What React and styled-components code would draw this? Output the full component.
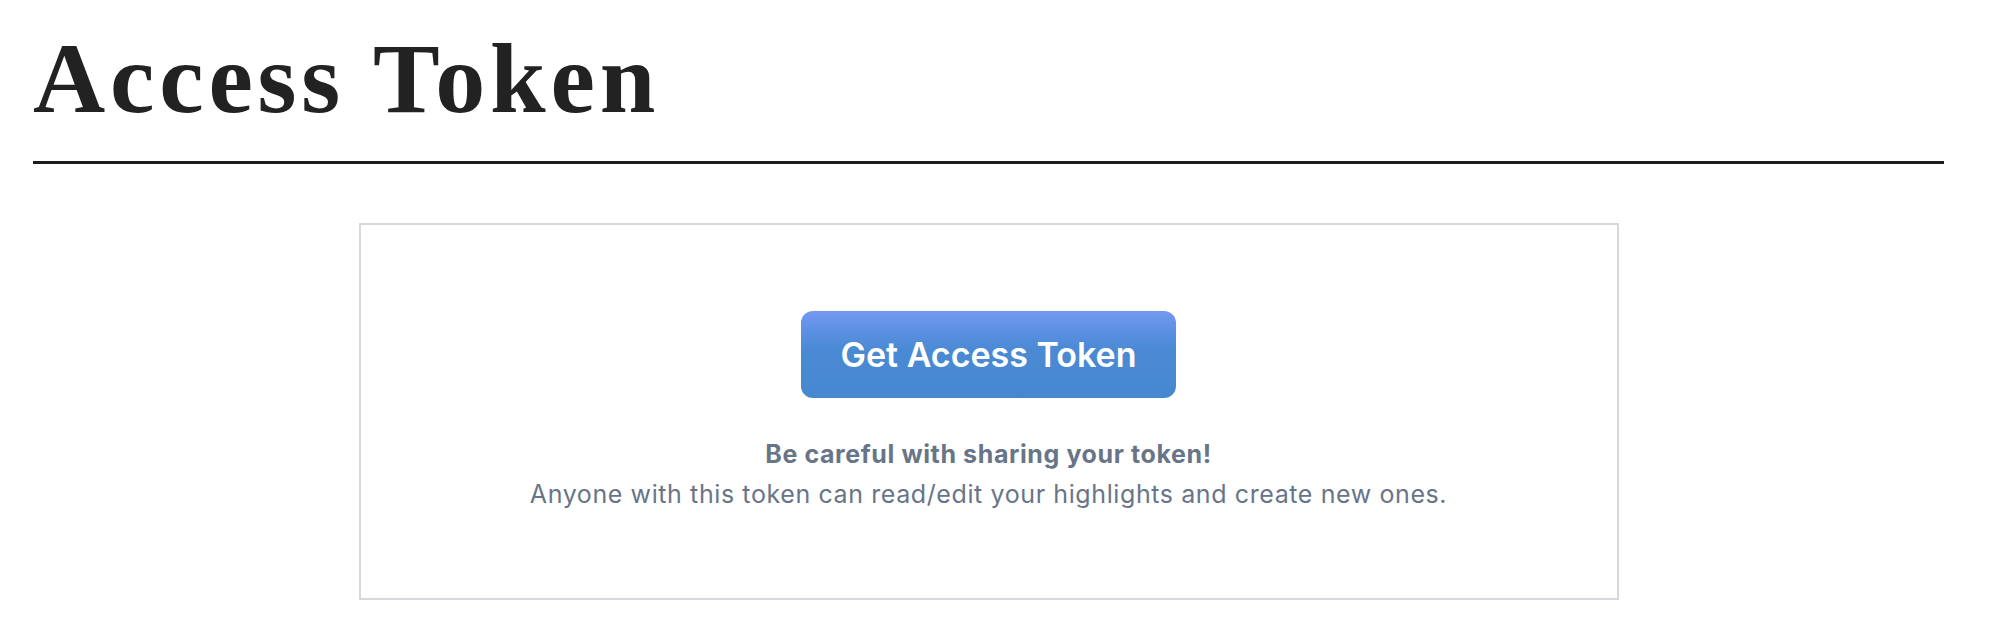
import React from "react";
import styled, { createGlobalStyle } from "styled-components";

const Global = createGlobalStyle`
  html, body { margin: 0; padding: 0; background: #ffffff; }
  body { font-family: "Inter", "Liberation Sans", sans-serif; }
`;

const Page = styled.main`
  padding: 29px 56px 0 33px;
`;

const Header = styled.header`
  border-bottom: 3px solid #1c1c1c;
  padding-bottom: 32px;
`;

const Title = styled.h1`
  margin: 0;
  font-family: "Liberation Serif", "DejaVu Serif", serif;
  font-weight: 700;
  font-size: 100px;
  line-height: 100px;
  letter-spacing: 4.8px;
  color: #222222;
`;

const Card = styled.section`
  width: 1260px;
  box-sizing: border-box;
  margin: 59px auto 0;
  border: 2px solid #d7d7dc;
  padding: 86px 40px 84px;
  display: flex;
  flex-direction: column;
  align-items: center;
`;

const Button = styled.button`
  width: 375px;
  height: 87px;
  border: none;
  border-radius: 12px;
  background: linear-gradient(180deg, #7498f1 0%, #5a8fe0 25%, #4a8ad4 45%, #4688d0 100%);
  color: #ffffff;
  font-family: "Inter", "Liberation Sans", sans-serif;
  font-weight: 600;
  font-size: 34px;
  cursor: pointer;
  box-shadow: 0 0 1px rgba(0, 0, 0, 0.08);
`;

const Notice = styled.div`
  margin-top: 36px;
  text-align: center;
  color: #687588;
  font-size: 25px;
  line-height: 40px;
  letter-spacing: 0.6px;
`;

const Warning = styled.div`
  font-weight: 700;
`;

const Detail = styled.div`
  font-weight: 400;
`;

export default function App() {
  return (
    <>
      <Global />
      <Page>
        <Header>
          <Title>Access Token</Title>
        </Header>
        <Card>
          <Button type="button">Get Access Token</Button>
          <Notice>
            <Warning>Be careful with sharing your token!</Warning>
            <Detail>
              Anyone with this token can read/edit your highlights and create new ones.
            </Detail>
          </Notice>
        </Card>
      </Page>
    </>
  );
}
